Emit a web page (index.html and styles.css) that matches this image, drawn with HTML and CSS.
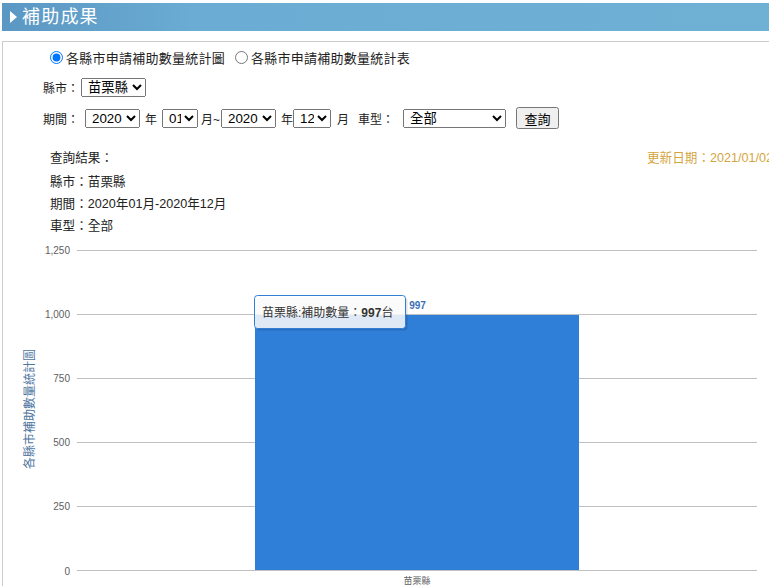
FILE: index.html
```html
<!DOCTYPE html>
<html lang="zh-Hant">
<head>
<meta charset="utf-8">
<title>補助成果</title>
<link rel="stylesheet" href="styles.css">
</head>
<body>
<div class="title-bar"><span class="tri"></span><span class="title-text">補助成果</span></div>
<div class="panel">
  <div class="row radios">
    <label class="opt"><input type="radio" name="view" checked><span class="opt-text">各縣市申請補助數量統計圖</span></label>
    <label class="opt opt2"><input type="radio" name="view"><span class="opt-text">各縣市申請補助數量統計表</span></label>
  </div>
  <div class="row row-city">
    <span class="lbl">縣市：</span>
    <select class="sel sel-city m2"><option>苗栗縣</option></select>
  </div>
  <div class="row row-period">
    <span class="lbl">期間：</span>
    <select class="sel sel-year m6"><option>2020</option></select>
    <span class="lbl m5">年</span>
    <select class="sel sel-mon m5"><option>01</option></select>
    <span class="lbl m3">月~</span>
    <select class="sel sel-year m1"><option>2020</option></select>
    <span class="lbl m5">年</span>
    <select class="sel sel-mon2"><option>12</option></select>
    <span class="lbl m6">月</span>
    <span class="lbl m9">車型：</span>
    <select class="sel sel-type m9"><option>全部</option></select>
    <button class="btn">查詢</button>
  </div>
  <div class="result">
    <div class="result-top"><span class="result-head">查詢結果：</span><span class="update">更新日期：2021/01/02</span></div>
    <div class="result-line">縣市：苗栗縣</div>
    <div class="result-line">期間：2020年01月-2020年12月</div>
    <div class="result-line">車型：全部</div>
  </div>
  <svg class="chart" width="766" height="350" viewBox="3 236 766 350" xmlns="http://www.w3.org/2000/svg">
    <g class="grid">
      <line x1="77" y1="249.5" x2="757" y2="249.5"/>
      <line x1="77" y1="313.5" x2="757" y2="313.5"/>
      <line x1="77" y1="377.5" x2="757" y2="377.5"/>
      <line x1="77" y1="441.5" x2="757" y2="441.5"/>
      <line x1="77" y1="505.5" x2="757" y2="505.5"/>
    </g>
    <g class="ylabels">
      <text x="70" y="253">1,250</text>
      <text x="70" y="317">1,000</text>
      <text x="70" y="381">750</text>
      <text x="70" y="445">500</text>
      <text x="70" y="509">250</text>
      <text x="70" y="574">0</text>
    </g>
    <text class="ytitle" transform="translate(34 408) rotate(-90)">各縣市補助數量統計圖</text>
    <rect class="bar" x="255" y="314" width="324" height="255.5"/>
    <line class="axis" x1="77" y1="569.5" x2="757" y2="569.5"/>
    <text class="dlabel" x="417.5" y="307.5">997</text>
    <text class="xlabel" x="417" y="582.5">苗栗縣</text>
    <g class="tooltip">
      <rect class="tt-shadow" x="256.5" y="296.5" width="151" height="33" rx="3"/>
      <rect class="tt-box" x="254.5" y="294.5" width="151" height="33" rx="3"/>
      <text class="tt-text" x="262" y="316">苗栗縣:補助數量：<tspan class="tt-bold">997</tspan>台</text>
    </g>
  </svg>
</div>
</body>
</html>
```

FILE: styles.css
```css
html, body {
  margin: 0;
  padding: 0;
  overflow: hidden;
  background: #ffffff;
}

body {
  font-family: "Liberation Sans", "Noto Sans CJK TC", sans-serif;
  font-size: 13px;
  color: #222222;
}

.title-bar {
  margin: 3px 0 0 2px;
  height: 28px;
  background: linear-gradient(to right, #5b97c3 0%, #6aacd3 25%, #6fb0d5 100%);
  display: flex;
  align-items: center;
  color: #ffffff;
}

.tri {
  width: 0;
  height: 0;
  border-top: 6px solid transparent;
  border-bottom: 6px solid transparent;
  border-left: 7px solid #ffffff;
  margin-left: 8px;
  margin-right: 5px;
}

.title-text {
  font-size: 18px;
  letter-spacing: 1.2px;
  line-height: 28px;
}

.panel {
  margin: 10px 0 0 2px;
  border-top: 1px solid #cccccc;
  border-left: 1px solid #cccccc;
  padding-top: 5px;
  white-space: nowrap;
}

.row {
  display: flex;
  align-items: center;
  padding-left: 40px;
  height: 20px;
}

.radios {
  padding-left: 42px;
}

.opt {
  display: flex;
  align-items: center;
}

.opt input {
  margin: 0 3px 0 5px;
  width: 13px;
  height: 13px;
}

.opt2 {
  margin-left: 5px;
}

.opt-text {
  font-size: 13px;
  letter-spacing: 0.25px;
}

.row-city {
  margin-top: 10px;
}

.row-period {
  margin-top: 10px;
  height: 22px;
}

.lbl {
  font-size: 12px;
}

.m1 { margin-left: 1px; }
.m2 { margin-left: 2px; }
.m3 { margin-left: 3px; }
.m5 { margin-left: 5px; }
.m6 { margin-left: 6px; }
.m9 { margin-left: 9px; }

.sel {
  font-family: "Liberation Sans", "Noto Sans CJK TC", sans-serif;
  font-size: 13.33px;
  height: 19px;
  box-sizing: border-box;
  padding: 0 0 0 2px;
  color: #000000;
}

.sel-city { width: 65px; }
.sel-year { width: 55px; }
.sel-mon { width: 36px; }
.sel-mon2 { width: 38px; }
.sel-type { width: 103px; }

.btn {
  margin-left: 10px;
  width: 43px;
  height: 22px;
  padding: 0;
  font-family: "Liberation Sans", "Noto Sans CJK TC", sans-serif;
  font-size: 13px;
  color: #000000;
}

.result {
  margin-top: 18px;
  padding-left: 47px;
  font-size: 12.6px;
  line-height: 22px;
  color: #222222;
}

.result-top {
  display: flex;
  margin-bottom: 2px;
}

.result-head {
  width: 597px;
  flex: none;
}

.update {
  color: #d4a53e;
  flex: none;
}

.chart {
  display: block;
}

.grid line,
.axis {
  stroke: #c0c0c0;
  stroke-width: 1;
}

.ylabels text {
  font-family: "Liberation Sans", sans-serif;
  font-size: 10px;
  fill: #606060;
  text-anchor: end;
}

.ytitle {
  font-family: "Noto Sans CJK TC", sans-serif;
  font-size: 12px;
  fill: #4d759e;
  text-anchor: middle;
}

.bar {
  fill: #2f7ed8;
}

.dlabel {
  font-family: "Liberation Sans", sans-serif;
  font-size: 10px;
  font-weight: bold;
  fill: #3b6eb4;
  text-anchor: middle;
}

.xlabel {
  font-family: "Noto Sans CJK TC", sans-serif;
  font-size: 9px;
  fill: #606060;
  text-anchor: middle;
}

.tt-shadow {
  fill: rgba(0, 0, 0, 0.12);
}

.tt-box {
  fill: rgba(255, 255, 255, 0.85);
  stroke: #2f7ed8;
  stroke-width: 1;
}

.tt-text {
  font-family: "Liberation Sans", "Noto Sans CJK TC", sans-serif;
  font-size: 12px;
  fill: #333333;
}

.tt-bold {
  font-weight: bold;
}
```
